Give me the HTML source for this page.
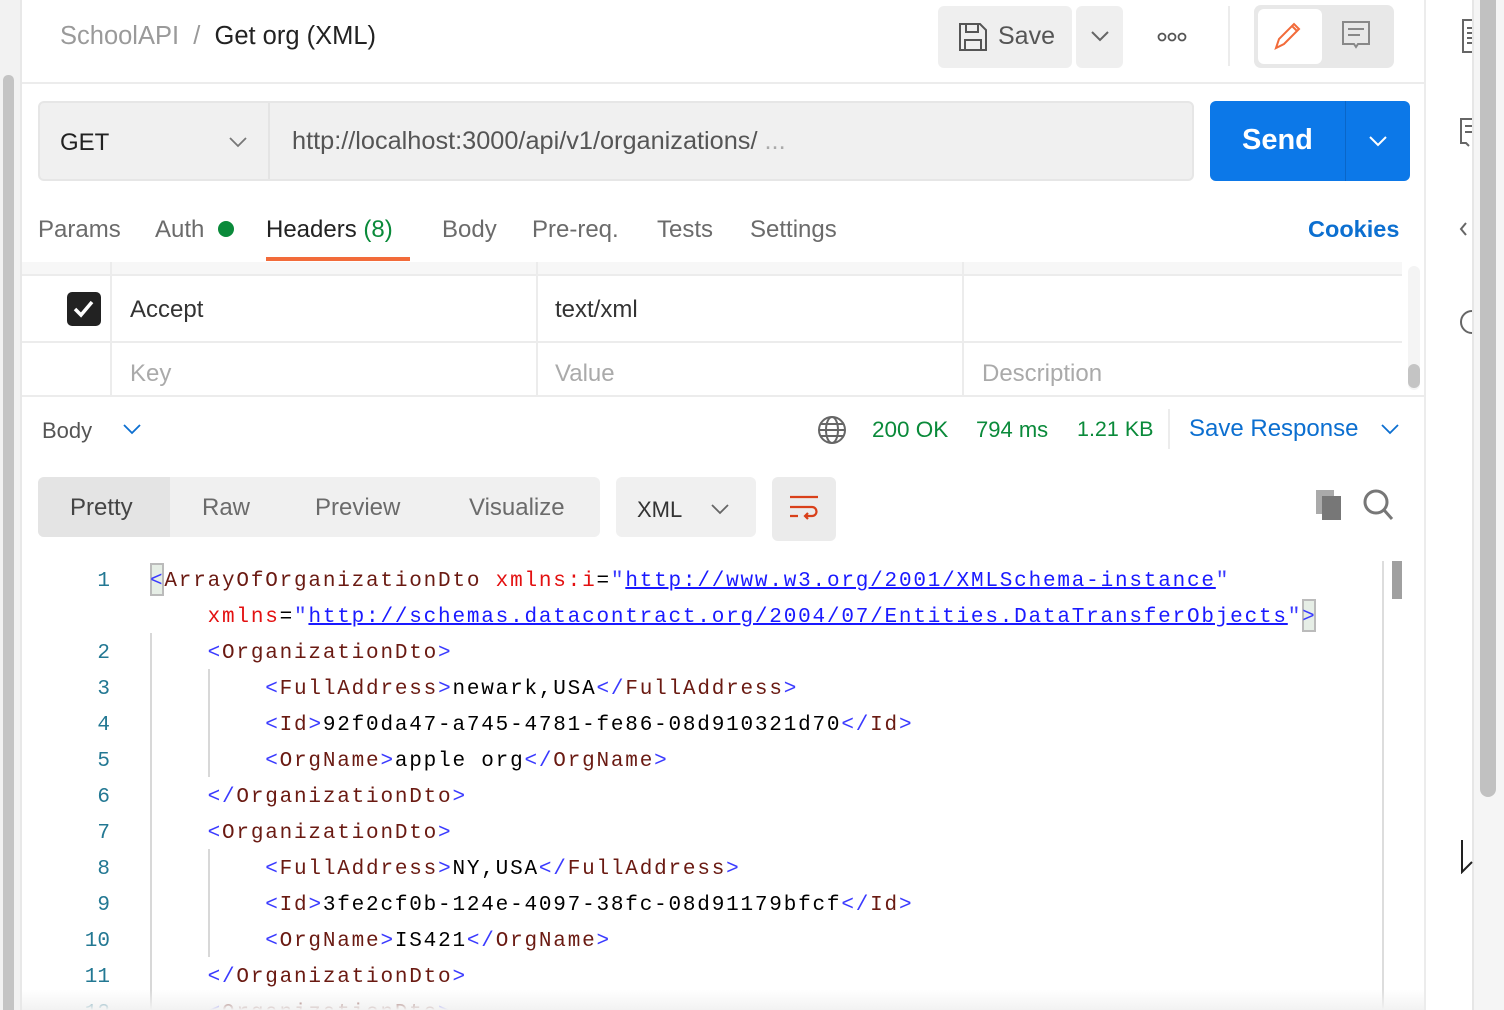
<!DOCTYPE html>
<html><head><meta charset="utf-8"><style>
*{margin:0;padding:0;box-sizing:border-box}
html,body{width:1504px;height:1010px;overflow:hidden}
body{background:#fff;font-family:"Liberation Sans",sans-serif;position:relative;color:#212121}
.a{position:absolute}
.t{font-size:24px;color:#6b6b6b;white-space:nowrap}
.code{font-family:"Liberation Mono",monospace;font-size:21px;letter-spacing:1.8px;white-space:pre;color:#000}
.ln{font-family:"Liberation Mono",monospace;font-size:21px;color:#237893;text-align:right;width:40px}
.b{color:#3a3aff}.n{color:#6a1a12}.r{color:#e31010}.u{color:#1a1aff;text-decoration:underline;text-decoration-thickness:2px}
</style></head><body>
<div class="a" style="left:0;top:0;width:20px;height:1010px;background:#f2f2f2"></div>
<div class="a" style="left:3px;top:75px;width:11px;height:935px;background:#c4c4c4;border-radius:5px 5px 0 0"></div>
<div class="a" style="left:20px;top:0;width:2px;height:1010px;background:#e8e8e8"></div>
<div class="a" style="left:1424px;top:0;width:2px;height:1010px;background:#ececec"></div>
<div class="a" style="left:1472px;top:0;width:32px;height:1010px;background:#f5f5f5;border-left:2px solid #e6e6e6"></div>
<div class="a" style="left:1480px;top:0;width:16px;height:797px;background:#c1c1c1;border-radius:0 0 8px 8px"></div>
<svg class="a" style="left:1458px;top:18px" width="16" height="340" fill="none" stroke="#666" stroke-width="2">
<path d="M14 2H5v32h9"/><path d="M9 10h5M9 15h5M9 20h5M9 25h5"/>
<path d="M14 101H3v24h5l3 3"/><path d="M7 108h7M7 114h7"/>
<path d="M8 205l-5 6 5 6"/>
<path d="M14 293a11 11 0 0 0 0 22"/>
</svg>
<svg class="a" style="left:1460px;top:838px" width="14" height="36" fill="#fff" stroke="#222" stroke-width="2"><path d="M2 2v32l10-10"/></svg>

<div class="a t" style="left:60px;top:22px;font-size:25.5px;color:#9a9a9a">SchoolAPI&nbsp;&nbsp;/&nbsp;&nbsp;<span style="color:#222">Get org (XML)</span></div>
<div class="a" style="left:938px;top:6px;width:134px;height:62px;background:#efefef;border-radius:6px"></div>
<svg class="a" style="left:958px;top:22px" width="30" height="30" fill="none" stroke="#555" stroke-width="2"><path d="M2 2h20l6 6v20H2z"/><path d="M8 2v8h12V2M7 28V18h16v10"/></svg>
<div class="a t" style="left:998px;top:22px;font-size:25px;color:#555">Save</div>
<div class="a" style="left:1076px;top:6px;width:47px;height:62px;background:#efefef;border-radius:6px"></div>
<svg class="a" style="left:1090px;top:30px" width="20" height="12" fill="none" stroke="#666" stroke-width="2"><path d="M2 2l8 8 8-8"/></svg>
<svg class="a" style="left:1157px;top:31px" width="32" height="12" fill="none" stroke="#555" stroke-width="1.8"><circle cx="5" cy="6" r="3.5"/><circle cx="15" cy="6" r="3.5"/><circle cx="25" cy="6" r="3.5"/></svg>
<div class="a" style="left:1228px;top:6px;width:2px;height:60px;background:#ececec"></div>
<div class="a" style="left:1254px;top:5px;width:140px;height:63px;background:#e8e8e8;border-radius:7px"></div>
<div class="a" style="left:1258px;top:9px;width:64px;height:55px;background:#fff;border-radius:6px"></div>
<svg class="a" style="left:1272px;top:20px" width="36" height="32" fill="none" stroke="#f26b3a" stroke-width="2"><path d="M4 28l3-9L22 4l5 5L12 24z M20 6l5 5"/></svg>
<svg class="a" style="left:1340px;top:20px" width="32" height="30" fill="none" stroke="#888" stroke-width="2"><path d="M3 2h26v22H18l-2 3-2-3H3z"/><path d="M8 9h16M8 15h12"/></svg>
<div class="a" style="left:22px;top:82px;width:1402px;height:2px;background:#ececec"></div>

<div class="a" style="left:38px;top:101px;width:1156px;height:80px;background:#f0f0f0;border:2px solid #e6e6e6;border-radius:6px"></div>
<div class="a" style="left:268px;top:103px;width:2px;height:76px;background:#e4e4e4"></div>
<div class="a t" style="left:60px;top:129px;font-size:24px;color:#222">GET</div>
<svg class="a" style="left:228px;top:136px" width="20" height="12" fill="none" stroke="#777" stroke-width="1.8"><path d="M2 2l8 8 8-8"/></svg>
<div class="a t" style="left:292px;top:127px;font-size:25.3px;color:#555">http://localhost:3000/api/v1/organizations/ <span style="color:#aaa">...</span></div>
<div class="a" style="left:1210px;top:101px;width:200px;height:80px;background:#0c78e8;border-radius:6px"></div>
<div class="a" style="left:1345px;top:101px;width:1px;height:80px;background:#0a66c8"></div>
<div class="a t" style="left:1242px;top:124px;font-size:29px;font-weight:bold;color:#fff">Send</div>
<svg class="a" style="left:1368px;top:135px" width="20" height="12" fill="none" stroke="#fff" stroke-width="2"><path d="M2 2l8 8 8-8"/></svg>

<div class="a t" style="left:38px;top:216px">Params</div>
<div class="a t" style="left:155px;top:216px">Auth</div>
<div class="a" style="left:218px;top:221px;width:16px;height:16px;border-radius:50%;background:#0a8a3a"></div>
<div class="a t" style="left:266px;top:216px;color:#222">Headers <span style="color:#0a8a3a">(8)</span></div>
<div class="a" style="left:266px;top:257px;width:144px;height:4px;background:#f26b3a"></div>
<div class="a t" style="left:442px;top:216px">Body</div>
<div class="a t" style="left:532px;top:216px">Pre-req.</div>
<div class="a t" style="left:657px;top:216px">Tests</div>
<div class="a t" style="left:750px;top:216px">Settings</div>
<div class="a t" style="left:1308px;top:216px;color:#0c6fd0;font-weight:bold;font-size:23.5px">Cookies</div>

<div class="a" style="left:22px;top:262px;width:1380px;height:14px;background:#f7f7f7;border-bottom:2px solid #ececec"></div>
<div class="a" style="left:22px;top:341px;width:1380px;height:2px;background:#ececec"></div>
<div class="a" style="left:22px;top:395px;width:1402px;height:2px;background:#ececec"></div>
<div class="a" style="left:110px;top:262px;width:2px;height:133px;background:#ececec"></div>
<div class="a" style="left:536px;top:262px;width:2px;height:133px;background:#ececec"></div>
<div class="a" style="left:962px;top:262px;width:2px;height:133px;background:#ececec"></div>
<div class="a" style="left:1408px;top:266px;width:12px;height:124px;background:#f4f4f4;border-radius:6px"></div>
<div class="a" style="left:1408px;top:364px;width:12px;height:24px;background:#c4c4c4;border-radius:6px"></div>
<div class="a" style="left:67px;top:292px;width:34px;height:34px;background:#222;border-radius:5px"></div>
<svg class="a" style="left:70px;top:296px" width="28" height="26" fill="none" stroke="#fff" stroke-width="3.5"><path d="M5 13l6 6L22 6"/></svg>
<div class="a t" style="left:130px;top:296px;color:#333">Accept</div>
<div class="a t" style="left:555px;top:296px;color:#333">text/xml</div>
<div class="a t" style="left:130px;top:360px;color:#aaa">Key</div>
<div class="a t" style="left:555px;top:360px;color:#aaa">Value</div>
<div class="a t" style="left:982px;top:360px;color:#aaa">Description</div>

<div class="a t" style="left:42px;top:418px;font-size:22px;color:#555">Body</div>
<svg class="a" style="left:122px;top:423px" width="20" height="12" fill="none" stroke="#0c6fd0" stroke-width="1.8"><path d="M2 2l8 8 8-8"/></svg>
<svg class="a" style="left:816px;top:414px" width="32" height="32" fill="none" stroke="#666" stroke-width="2"><circle cx="16" cy="16" r="13"/><ellipse cx="16" cy="16" rx="6" ry="13"/><path d="M3 16h26M5 10h22M5 22h22"/></svg>
<div class="a t" style="left:872px;top:417px;color:#0a8a3a;font-size:22.5px">200 OK</div>
<div class="a t" style="left:976px;top:417px;color:#0a8a3a;font-size:22px">794 ms</div>
<div class="a t" style="left:1077px;top:417px;color:#0a8a3a;font-size:21.5px">1.21 KB</div>
<div class="a" style="left:1168px;top:409px;width:2px;height:40px;background:#ececec"></div>
<div class="a t" style="left:1189px;top:415px;color:#0c6fd0;font-size:24px">Save Response</div>
<svg class="a" style="left:1380px;top:423px" width="20" height="12" fill="none" stroke="#0c6fd0" stroke-width="1.8"><path d="M2 2l8 8 8-8"/></svg>

<div class="a" style="left:38px;top:477px;width:562px;height:60px;background:#f0f0f0;border-radius:6px"></div>
<div class="a" style="left:38px;top:477px;width:132px;height:60px;background:#e4e4e4;border-radius:6px 0 0 6px"></div>
<div class="a t" style="left:70px;top:494px;color:#444">Pretty</div>
<div class="a t" style="left:202px;top:494px">Raw</div>
<div class="a t" style="left:315px;top:494px">Preview</div>
<div class="a t" style="left:469px;top:494px">Visualize</div>
<div class="a" style="left:616px;top:477px;width:140px;height:60px;background:#f0f0f0;border-radius:6px"></div>
<div class="a t" style="left:637px;top:497px;font-size:22px;color:#333">XML</div>
<svg class="a" style="left:710px;top:503px" width="20" height="12" fill="none" stroke="#666" stroke-width="1.8"><path d="M2 2l8 8 8-8"/></svg>
<div class="a" style="left:772px;top:477px;width:64px;height:64px;background:#ebebeb;border-radius:6px"></div>
<svg class="a" style="left:788px;top:494px" width="34" height="30" fill="none" stroke="#d9401a" stroke-width="2.2"><path d="M2 3h28M2 13h22a4 4 0 0 1 0 9h-7M2 22h8M20 19l-3 3 3 3"/></svg>
<svg class="a" style="left:1314px;top:488px" width="34" height="34"><rect x="2" y="2" width="18" height="24" fill="#aaa"/><rect x="8" y="8" width="19" height="24" fill="#777"/></svg>
<svg class="a" style="left:1362px;top:488px" width="32" height="34" fill="none" stroke="#777" stroke-width="3"><circle cx="14" cy="14" r="11"/><path d="M22 22l8 9"/></svg>

<div class="a" style="left:1382px;top:561px;width:2px;height:449px;background:#ddd"></div>
<div class="a" style="left:1392px;top:561px;width:10px;height:38px;background:#a0a0a0"></div>
<div class="a" style="left:150px;top:633px;width:2px;height:377px;background:#d8d8d8"></div>
<div class="a" style="left:208px;top:669px;width:2px;height:108px;background:#d8d8d8"></div>
<div class="a" style="left:208px;top:849px;width:2px;height:108px;background:#d8d8d8"></div>
<div class="a" style="left:150px;top:563px;width:14px;height:33px;background:#e6eee6;border:2px solid #bbb"></div>
<div class="a" style="left:1302px;top:599px;width:14px;height:33px;background:#e6eee6;border:2px solid #bbb"></div>
<div class="a" style="left:70px;top:564px;line-height:36px;height:446px;overflow:hidden">
<div class="ln">1</div><div class="ln">&nbsp;</div><div class="ln">2</div><div class="ln">3</div><div class="ln">4</div><div class="ln">5</div><div class="ln">6</div><div class="ln">7</div><div class="ln">8</div><div class="ln">9</div><div class="ln">10</div><div class="ln">11</div><div class="ln">12</div></div>
<div class="a code" style="left:150px;top:564px;line-height:36px;height:446px;overflow:hidden"><span class="b">&lt;</span><span class="n">ArrayOfOrganizationDto</span> <span class="r">xmlns:i</span>=<span class="b">"</span><span class="u">http://www.w3.org/2001/XMLSchema-instance</span><span class="b">"</span>
    <span class="r">xmlns</span>=<span class="b">"</span><span class="u">http://schemas.datacontract.org/2004/07/Entities.DataTransferObjects</span><span class="b">"&gt;</span>
    <span class="b">&lt;</span><span class="n">OrganizationDto</span><span class="b">&gt;</span>
        <span class="b">&lt;</span><span class="n">FullAddress</span><span class="b">&gt;</span>newark,USA<span class="b">&lt;/</span><span class="n">FullAddress</span><span class="b">&gt;</span>
        <span class="b">&lt;</span><span class="n">Id</span><span class="b">&gt;</span>92f0da47-a745-4781-fe86-08d910321d70<span class="b">&lt;/</span><span class="n">Id</span><span class="b">&gt;</span>
        <span class="b">&lt;</span><span class="n">OrgName</span><span class="b">&gt;</span>apple org<span class="b">&lt;/</span><span class="n">OrgName</span><span class="b">&gt;</span>
    <span class="b">&lt;/</span><span class="n">OrganizationDto</span><span class="b">&gt;</span>
    <span class="b">&lt;</span><span class="n">OrganizationDto</span><span class="b">&gt;</span>
        <span class="b">&lt;</span><span class="n">FullAddress</span><span class="b">&gt;</span>NY,USA<span class="b">&lt;/</span><span class="n">FullAddress</span><span class="b">&gt;</span>
        <span class="b">&lt;</span><span class="n">Id</span><span class="b">&gt;</span>3fe2cf0b-124e-4097-38fc-08d91179bfcf<span class="b">&lt;/</span><span class="n">Id</span><span class="b">&gt;</span>
        <span class="b">&lt;</span><span class="n">OrgName</span><span class="b">&gt;</span>IS421<span class="b">&lt;/</span><span class="n">OrgName</span><span class="b">&gt;</span>
    <span class="b">&lt;/</span><span class="n">OrganizationDto</span><span class="b">&gt;</span>
    <span class="b">&lt;</span><span class="n">OrganizationDto</span><span class="b">&gt;</span></div>
<div class="a" style="left:22px;top:990px;width:1402px;height:20px;background:linear-gradient(rgba(255,255,255,0),#f2f2f2)"></div>
</body></html>
